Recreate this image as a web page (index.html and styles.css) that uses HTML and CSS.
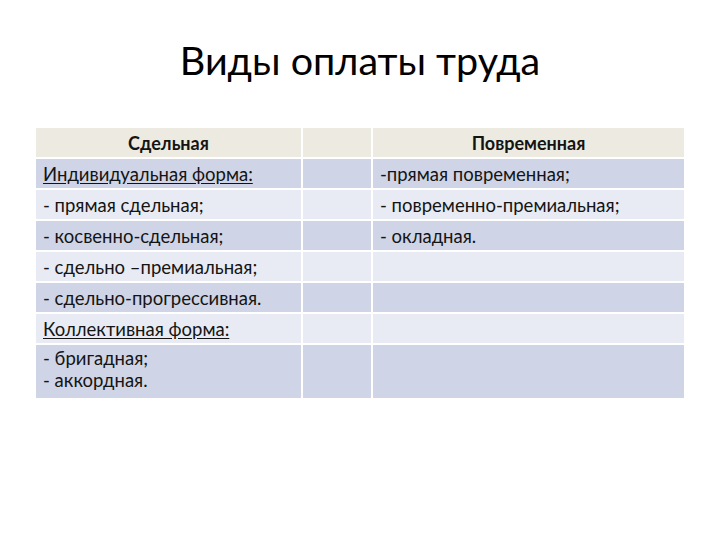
FILE: index.html
```html
<!DOCTYPE html>
<html lang="ru">
<head>
<meta charset="utf-8">
<link rel="stylesheet" href="styles.css">
</head>
<body>
<div class="slide">
  <h1 class="title">Виды оплаты труда</h1>
  <table class="pay">
    <colgroup>
      <col class="c1"><col class="c2"><col class="c3">
    </colgroup>
    <thead>
      <tr class="head">
        <th>Сдельная</th><th></th><th>Повременная</th>
      </tr>
    </thead>
    <tbody>
      <tr class="odd"><td><u>Индивидуальная форма:</u></td><td></td><td>-прямая повременная;</td></tr>
      <tr class="even"><td>- прямая сдельная;</td><td></td><td>- повременно-премиальная;</td></tr>
      <tr class="odd"><td>- косвенно-сдельная;</td><td></td><td>- окладная.</td></tr>
      <tr class="even"><td>- сдельно –премиальная;</td><td></td><td></td></tr>
      <tr class="odd"><td>- сдельно-прогрессивная.</td><td></td><td></td></tr>
      <tr class="even"><td><u>Коллективная форма:</u></td><td></td><td></td></tr>
      <tr class="odd last"><td>- бригадная;<br>- аккордная.</td><td></td><td></td></tr>
    </tbody>
  </table>
</div>
</body>
</html>
```
FILE: styles.css
```css
html, body {
  margin: 0;
  padding: 0;
  background: #fff;
}
.slide {
  width: 720px;
  height: 540px;
  display: flex;
  flex-direction: column;
  align-items: center;
  font-family: Lato, "Liberation Sans", sans-serif;
  color: #000;
}
.title {
  margin: 36px 0 0;
  font-weight: 400;
  font-size: 39.5px;
  line-height: 48px;
}
.pay {
  margin-top: 42px;
  border-collapse: collapse;
  table-layout: fixed;
  width: 650px;
  font-size: 18.5px;
}
.c1 { width: 267px; }
.c2 { width: 70px; }
.c3 { width: 313px; }
.pay th, .pay td {
  border: 2px solid #fff;
  padding: 0 7px;
  height: 29px;
  text-align: left;
  line-height: 20px;
  color: #141414;
}
.pay th {
  text-align: center;
  font-weight: 700;
  font-size: 18px;
}
.head th { background: #edebe1; }
.odd td { background: #cfd5e6; }
.even td { background: #e8ebf3; }
.last td {
  height: 51px;
  padding-top: 2px;
  vertical-align: top;
  line-height: 22px;
}
.pay u {
  text-underline-offset: 2px;
}
```
